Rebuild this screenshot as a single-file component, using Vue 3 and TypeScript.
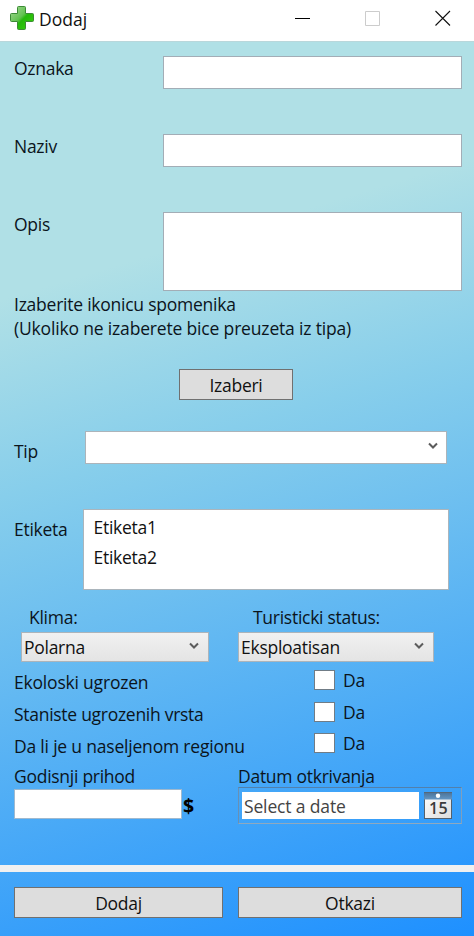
<script setup lang="ts">
import { ref } from 'vue'

interface Check { id: string; label: string; value: boolean }

const oznaka = ref('')
const naziv = ref('')
const opis = ref('')
const prihod = ref('')
const etikete: string[] = ['Etiketa1', 'Etiketa2']
const checks = ref<Check[]>([
  { id: 'eko', label: 'Ekoloski ugrozen', value: false },
  { id: 'vrste', label: 'Staniste ugrozenih vrsta', value: false },
  { id: 'region', label: 'Da li je u naseljenom regionu', value: false },
])
</script>

<template>
  <div class="window">
    <header class="titlebar">
      <svg class="plus" width="26" height="26" viewBox="0 0 26 26">
        <defs>
          <linearGradient id="plusFill" x1="0" y1="0" x2="1" y2="1">
            <stop offset="0" stop-color="#a9d99b" />
            <stop offset=".45" stop-color="#62c250" />
            <stop offset=".55" stop-color="#25b80b" />
            <stop offset="1" stop-color="#39d40d" />
          </linearGradient>
        </defs>
        <path d="M9.5 1.5h6q1 0 1 1v6h7q1 0 1 1v6q0 1-1 1h-7v7q0 1-1 1h-6q-1 0-1-1v-7h-6q-1 0-1-1v-6q0-1 1-1h6v-6q0-1 1-1z" fill="url(#plusFill)" stroke="#3c8b35" />
      </svg>
      <span class="title">Dodaj</span>
      <div class="controls">
        <svg width="16" height="16" viewBox="0 0 16 16"><path d="M0 8.5h15" stroke="#000" /></svg>
        <svg width="16" height="16" viewBox="0 0 16 16"><path d="M.5 1.5h14v14H.5z" fill="none" stroke="#ccc" /></svg>
        <svg width="16" height="16" viewBox="0 0 16 16"><path d="M.5 1l14.5 14.5M15 1L.5 15.5" stroke="#111" stroke-width="1.1" /></svg>
      </div>
    </header>

    <main class="body">
      <div class="field"><label>Oznaka</label><input v-model="oznaka" class="box" /></div>
      <div class="field"><label>Naziv</label><input v-model="naziv" class="box" /></div>
      <div class="field"><label>Opis</label><textarea v-model="opis" class="box tall"></textarea></div>

      <div class="hint">
        <div>Izaberite ikonicu spomenika</div>
        <div class="hint-note">(Ukoliko ne izaberete bice preuzeta iz tipa)</div>
      </div>
      <button class="btn pick">Izaberi</button>

      <div class="tip-row">
        <label>Tip</label>
        <div class="combo plain">
          <svg class="chev" width="10" height="8" viewBox="0 0 10 8"><path d="M1 1.5l4 4 4-4" /></svg>
        </div>
      </div>

      <div class="tag-row">
        <label>Etiketa</label>
        <ul class="list"><li v-for="e in etikete" :key="e">{{ e }}</li></ul>
      </div>

      <div class="selects">
        <div class="select klima">
          <label>Klima:</label>
          <div class="combo">
            <span>Polarna</span>
            <svg class="chev" width="10" height="8" viewBox="0 0 10 8"><path d="M1 1.5l4 4 4-4" /></svg>
          </div>
        </div>
        <div class="select status">
          <label>Turisticki status:</label>
          <div class="combo">
            <span>Eksploatisan</span>
            <svg class="chev" width="10" height="8" viewBox="0 0 10 8"><path d="M1 1.5l4 4 4-4" /></svg>
          </div>
        </div>
      </div>

      <div class="checks">
        <div v-for="c in checks" :key="c.id" class="check">
          <span class="check-label">{{ c.label }}</span>
          <label class="check-box"><input v-model="c.value" type="checkbox" /><span>Da</span></label>
        </div>
      </div>

      <div class="bottom">
        <div class="income">
          <label>Godisnji prihod</label>
          <div class="income-row"><input v-model="prihod" class="box" /><b>$</b></div>
        </div>
        <div class="date">
          <label>Datum otkrivanja</label>
          <div class="picker">
            <span class="picker-text">Select a date</span>
            <svg width="28" height="27" viewBox="0 0 28 27">
              <defs>
                <linearGradient id="page" x1="0" y1="0" x2="1" y2="1">
                  <stop offset="0" stop-color="#fff" /><stop offset="1" stop-color="#dcdcdc" />
                </linearGradient>
                <linearGradient id="head" x1="0" y1="0" x2="0" y2="1">
                  <stop offset="0" stop-color="#4a7196" /><stop offset="1" stop-color="#6497c4" />
                </linearGradient>
              </defs>
              <rect x=".5" y=".5" width="27" height="26" fill="url(#page)" stroke="#53616e" />
              <rect width="28" height="7.5" fill="url(#head)" />
              <path d="M0 .5h28" stroke="#566878" />
              <circle cx="14" cy="3.8" r="2.2" fill="#fff" />
              <text x="14.5" y="22" text-anchor="middle">15</text>
            </svg>
          </div>
        </div>
      </div>
    </main>

    <footer class="footer">
      <button class="btn">Dodaj</button>
      <button class="btn">Otkazi</button>
    </footer>
  </div>
</template>

<style>
body { margin: 0; overflow: hidden; }
</style>

<style scoped>
* { box-sizing: border-box; }
.window {
  width: 474px;
  height: 936px;
  display: flex;
  flex-direction: column;
  font: 17.5px/24px "Open Sans", "Noto Sans", sans-serif;
  letter-spacing: -0.27px;
  color: #0b141c;
  white-space: nowrap;
  background: linear-gradient(163.3deg, #b0e0e6 25%, #87ceeb 44%, #1e90ff 100%) 0 41px / 474px 895px no-repeat;
}
input, textarea, button { font: inherit; letter-spacing: inherit; color: inherit; border-radius: 0; margin: 0; outline: 0; resize: none; }
.titlebar { height: 41px; flex: none; background: #fff; display: flex; align-items: flex-start; padding: 5px 23px 0 9px; color: #111; }
.plus { flex: none; }
.title { margin: 2px 0 0 4px; letter-spacing: 0; }
.controls { margin: 5px 0 0 auto; display: flex; gap: 54px; transform: translateX(-.5px); transform: none; }
.body { height: 824px; flex: none; display: flex; flex-direction: column; border-top: 1px solid #b9d7db; }
.field { height: 78px; display: flex; align-items: flex-start; padding: 15px 12px 0 14px; }
.field:first-child { height: 77px; padding-top: 14px; }
.field label { width: 149px; flex: none; }
.box { background: #fff; border: 1px solid #a3adb6; padding: 2px 4px; height: 33px; width: 299px; display: block; }
.box.tall { height: 79px; }
.hint { margin: 17px 0 0 14px; height: 49px; letter-spacing: -0.24px; }
.hint-note { letter-spacing: -0.17px; }
.btn { background: #ddd; border: 1px solid #707070; color: #111; padding: 0; height: 31px; display: flex; align-items: center; justify-content: center; }
.pick { width: 114px; margin: 28px 0 0 179px; flex: none; }
.tip-row { margin: 31px 0 0 14px; display: flex; }
.tip-row label { width: 71px; padding-top: 8px; }
.combo { display: flex; align-items: center; justify-content: space-between; border: 1px solid #acb4ba; background: linear-gradient(#f1f1f1, #e4e4e4); height: 30px; padding: 0 9px 0 2px; color: #111; }
.combo.plain { width: 362px; height: 33px; background: #fff; justify-content: flex-end; padding-right: 8px; }
.chev { margin-top: -3px; }
.chev path { fill: none; stroke: #5c5c5c; stroke-width: 2; }
.tag-row { margin: 45px 0 0 14px; display: flex; }
.tag-row label { width: 69px; padding-top: 8px; }
.list { list-style: none; margin: 0; width: 366px; height: 81px; background: #fff; border: 1px solid #abb5bc; padding: 2px 9.5px; color: #111; line-height: 30px; }
.selects { margin-top: 15px; display: flex; }
.select label { display: block; height: 27px; }
.klima { margin-left: 21px; width: 188px; }
.klima label { padding-left: 8px; }
.status { margin-left: 29px; width: 196px; }
.status label { padding-left: 15px; }
.checks { margin-top: 4px; }
.check { display: flex; height: 31.5px; }
.check-label { width: 300px; margin-left: 14px; padding-top: 4px; letter-spacing: -0.2px; }
.check:nth-child(2) .check-label { letter-spacing: -0.28px; }
.check:nth-child(3) .check-label { padding-top: 5px; }
.check-box { display: flex; padding-top: 2px; }
.check-box input { appearance: none; width: 21px; height: 20px; margin: 2px 8px 0 0; background: #fff; border: 1px solid #707c86; }
.bottom { display: flex; margin-top: 3px; padding-left: 14px; }
.bottom label { display: block; height: 23px; line-height: 24px; }
.income { width: 224px; }
.income-row { display: flex; padding-top: 2px; }
.income-row .box { width: 168px; height: 30px; border-color: #9fb9cf; }
.income-row b { margin: 5px 0 0 1px; color: #000; font-size: 19.5px; }
.picker { width: 224px; height: 37px; border: 1px solid; border-color: #5280ab #7f9fbe #8fa9bf #6790b5; padding: 4px 9px 4px 3px; display: flex; justify-content: space-between; }
.picker-text { width: 177px; height: 27px; line-height: 28px; background: #fff; padding-left: 2px; color: #444; letter-spacing: -0.15px; }
.picker text { font: 600 16px "Open Sans", sans-serif; letter-spacing: .4px; fill: #3b3b3b; }
.footer { height: 71px; border-top: 7px solid #f0f0f0; padding: 15px 12px 0 14px; display: grid; grid-template-columns: 209px 224px; gap: 15px; align-items: start; }
</style>
